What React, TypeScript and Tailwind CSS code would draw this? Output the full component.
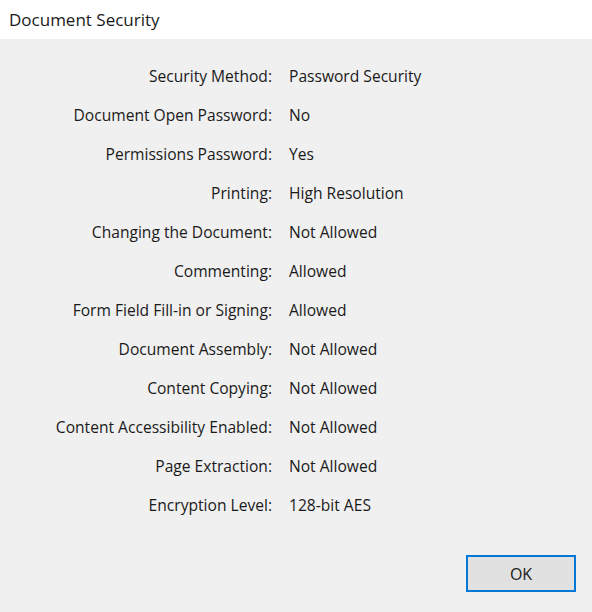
const rows: [string, string][] = [
  ["Security Method:", "Password Security"],
  ["Document Open Password:", "No"],
  ["Permissions Password:", "Yes"],
  ["Printing:", "High Resolution"],
  ["Changing the Document:", "Not Allowed"],
  ["Commenting:", "Allowed"],
  ["Form Field Fill-in or Signing:", "Allowed"],
  ["Document Assembly:", "Not Allowed"],
  ["Content Copying:", "Not Allowed"],
  ["Content Accessibility Enabled:", "Not Allowed"],
  ["Page Extraction:", "Not Allowed"],
  ["Encryption Level:", "128-bit AES"],
];

export default function App() {
  return (
    <div
      className="w-[592px] h-[612px] flex flex-col bg-[#f0f0f0] text-[#1a1a1a]"
      style={{ fontFamily: '"Open Sans", "Noto Sans", sans-serif' }}
    >
      {/* Title bar */}
      <div className="h-[39px] bg-white flex items-center pl-[9px] text-[17px]">
        Document Security
      </div>

      {/* Property list */}
      <div className="pt-[18px] flex flex-col">
        {rows.map(([label, value]) => (
          <div key={label} className="flex h-[39px] items-center text-[15.6px]">
            <div className="w-[272px] text-right">{label}</div>
            <div className="pl-[17px]">{value}</div>
          </div>
        ))}
      </div>

      <div className="flex-1" />

      <div className="flex justify-end pr-[16px] pb-[20px]">
        <button className="w-[110px] h-[37px] bg-[#e1e1e1] border-2 border-[#0078d7] text-[16px]">
          OK
        </button>
      </div>
    </div>
  );
}
